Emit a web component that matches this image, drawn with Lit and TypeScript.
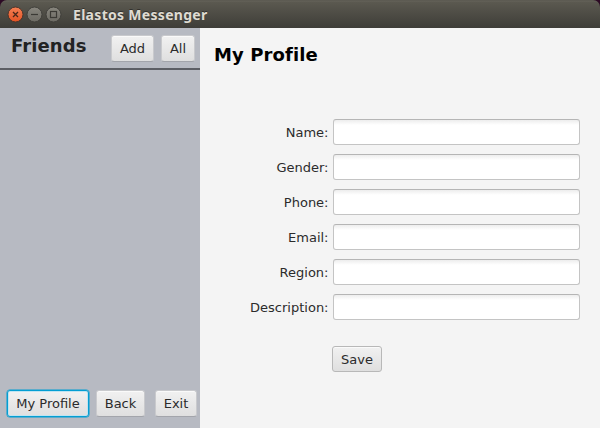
import { LitElement, html, css, svg } from "lit";
import { customElement } from "lit/decorators.js";

const FIELDS = ["Name:", "Gender:", "Phone:", "Email:", "Region:", "Description:"];

@customElement("app-root")
export class AppRoot extends LitElement {
  static styles = css`
    :host {
      display: flex;
      flex-direction: column;
      width: 600px;
      height: 428px;
      overflow: hidden;
      background: #2c0a24;
      font: 13px/16px "DejaVu Sans", sans-serif;
      color: #2b2b2b;
    }
    .titlebar {
      display: flex;
      align-items: center;
      box-sizing: border-box;
      height: 28px;
      flex: none;
      padding: 1px 0 0 7px;
      border-radius: 7px 7px 0 0;
      background: linear-gradient(#54524a 0, #66645b 1px, #5b5950 2px, #3e3d38 28px);
    }
    .controls { display: block; flex: none; }
    .title {
      margin: 1px 0 0 11px;
      font: bold 14px/20px "Noto Sans", "Open Sans", sans-serif;
      letter-spacing: 0.3px;
      color: #dfdbd2;
      text-shadow: 0 -1px #33322e;
      white-space: nowrap;
    }
    .body { display: flex; height: 400px; }
    .side {
      display: flex;
      flex-direction: column;
      justify-content: space-between;
      width: 200px;
      background: #b7bac2;
    }
    .head {
      display: flex;
      box-sizing: border-box;
      height: 42px;
      padding: 7px 5px 0 11px;
      border-bottom: 2px solid #5c5e64;
    }
    h1, h2 {
      margin: 0;
      font-size: 18px;
      line-height: 22px;
      font-weight: bold;
      letter-spacing: 0.1px;
      white-space: nowrap;
    }
    h1 { color: #222; width: 100px; }
    h2 { color: #000; }
    .btn {
      box-sizing: border-box;
      height: 27px;
      padding: 0;
      border: 1px solid #c9cacd;
      border-bottom-color: #a3a5ab;
      border-radius: 3px;
      background: linear-gradient(#f1f1f1, #dfdfdf);
      box-shadow: inset 0 1px #fafafa;
      font: inherit;
      color: #2b2b2b;
      text-align: center;
      white-space: nowrap;
    }
    .add { width: 43px; margin-right: 7px; }
    .all { width: 34px; }
    .foot { display: flex; padding: 0 2px 11px 7px; }
    .me {
      width: 82px;
      margin-right: 7px;
      border-color: #039ed3;
      box-shadow: 0 0 0 0.5px #039ed3, inset 0 0 0 1px #bfe4f1;
    }
    .back { width: 49px; margin-right: 10px; }
    .exit { width: 42px; }
    .main { flex: 1; background: #f4f4f4; padding: 16px 20px 0 14px; }
    .form {
      display: grid;
      grid-template-columns: 114.5px 247px;
      grid-auto-rows: 26px;
      row-gap: 9px;
      column-gap: 4.5px;
      margin-top: 53px;
    }
    .label { text-align: right; line-height: 28px; }
    .field {
      box-sizing: border-box;
      width: 247px;
      height: 26px;
      margin: 0;
      border: 1px solid #c4c4c4;
      border-top-color: #b5b5b5;
      border-radius: 3px;
      outline: none;
      background: linear-gradient(#ededed, #fff 5px);
    }
    .save {
      display: block;
      width: 50px;
      height: 26px;
      margin: 26px 0 0 118px;
      padding-top: 2px;
      border-color: #b8b8b8;
    }
  `;

  private control(cx: number, fill: string, rim: string, glyph: unknown) {
    return svg`<circle cx=${cx} cy="8.5" r="7.5" fill=${fill} stroke=${rim}></circle>${glyph}`;
  }

  render() {
    return html`
      <div class="titlebar">
        <svg class="controls" width="55" height="17" viewBox="0 0 55 17">
          <defs>
            <linearGradient id="close" x2="0" y2="1">
              <stop offset="0" stop-color="#f58054"></stop><stop offset="1" stop-color="#e45324"></stop>
            </linearGradient>
            <linearGradient id="plain" x2="0" y2="1">
              <stop offset="0" stop-color="#88867e"></stop><stop offset="1" stop-color="#6c6a63"></stop>
            </linearGradient>
          </defs>
          ${this.control(8.5, "url(#close)", "#4a342a", svg`<path d="M6 6l5 5M11 6l-5 5" stroke="#49271a" stroke-width="1.3"></path>`)}
          ${this.control(27.5, "url(#plain)", "#403f3a", svg`<path d="M24 8.5h7" stroke="#3b3a35" stroke-width="1.2"></path>`)}
          ${this.control(46.5, "url(#plain)", "#403f3a", svg`<rect x="43.5" y="5.5" width="6" height="6" fill="none" stroke="#3b3a35" stroke-width="1.2"></rect>`)}
        </svg>
        <div class="title">Elastos Messenger</div>
      </div>
      <div class="body">
        <div class="side">
          <div class="head">
            <h1>Friends</h1>
            <button class="btn add">Add</button>
            <button class="btn all">All</button>
          </div>
          <div class="foot">
            <button class="btn me">My Profile</button>
            <button class="btn back">Back</button>
            <button class="btn exit">Exit</button>
          </div>
        </div>
        <div class="main">
          <h2>My Profile</h2>
          <div class="form">
            ${FIELDS.map((f) => html`<div class="label">${f}</div><input class="field" aria-label=${f} />`)}
          </div>
          <button class="btn save">Save</button>
        </div>
      </div>
    `;
  }
}
